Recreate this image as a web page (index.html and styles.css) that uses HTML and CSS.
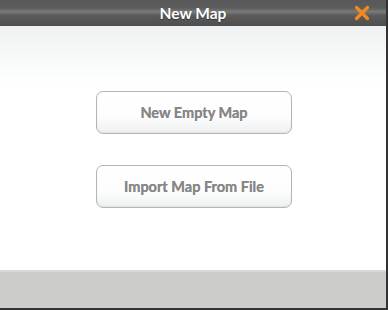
FILE: index.html
```html
<!DOCTYPE html>
<html lang="en">
<head>
    <meta charset="UTF-8">
    <title>New Map</title>
    <link rel="stylesheet" href="styles.css">
</head>
<body>
    <div class="dialog">
        <div class="title-bar">
            <span class="title">New Map</span>
            <button class="close-btn" aria-label="Close">
                <svg width="16" height="16" viewBox="0 0 16 16">
                    <path d="M2.5 2.5 L13.5 13.5 M13.5 2.5 L2.5 13.5" stroke="#f28a1e" stroke-width="3.2" stroke-linecap="round"/>
                </svg>
            </button>
        </div>
        <div class="content">
            <button class="map-btn">New Empty Map</button>
            <button class="map-btn">Import Map From File</button>
        </div>
        <div class="footer"></div>
    </div>
</body>
</html>
```

FILE: styles.css
```css
body {
    margin: 0;
    padding: 0;
    font-family: Lato, "Open Sans", sans-serif;
    background-color: #333;
}

.dialog {
    width: 386px;
    height: 308px;
    display: flex;
    flex-direction: column;
    background-color: #fff;
}

.title-bar {
    height: 26px;
    flex-shrink: 0;
    position: relative;
    display: flex;
    justify-content: center;
    align-items: center;
    background: linear-gradient(#585858 0%, #5c5c5c 30%, #7a7a7a 45%, #5a5a5a 60%, #4e4e4e 100%);
}

.title {
    color: #fff;
    font-size: 15.5px;
    font-weight: 700;
    text-shadow: 0 1px 1px rgba(0,0,0,0.4);
}

.close-btn {
    position: absolute;
    right: 16px;
    top: 5px;
    width: 16px;
    height: 16px;
    padding: 0;
    border: none;
    background: none;
    cursor: pointer;
}

.close-btn svg {
    display: block;
}

.content {
    flex: 1;
    display: flex;
    flex-direction: column;
    align-items: center;
    gap: 31px;
    padding-top: 65px;
    background: linear-gradient(#eff1f2 0px, #fafbfb 40px, #fff 60px);
}

.map-btn {
    width: 196px;
    height: 43px;
    border: 1px solid #b5b5b5;
    border-radius: 7px;
    background: linear-gradient(#fff 0%, #fdfdfd 60%, #eef0f1 100%);
    box-shadow: inset 0 -1px 2px rgba(0,0,0,0.06);
    color: #878787;
    font-family: Lato, "Open Sans", sans-serif;
    font-size: 14.5px;
    font-weight: 700;
    text-shadow: 0 0 0.6px #878787;
    cursor: pointer;
    margin-left: 2px;
}

.footer {
    height: 36px;
    flex-shrink: 0;
    background-color: #cccccb;
    border-top: 2px solid #d9d9d8;
}
```
